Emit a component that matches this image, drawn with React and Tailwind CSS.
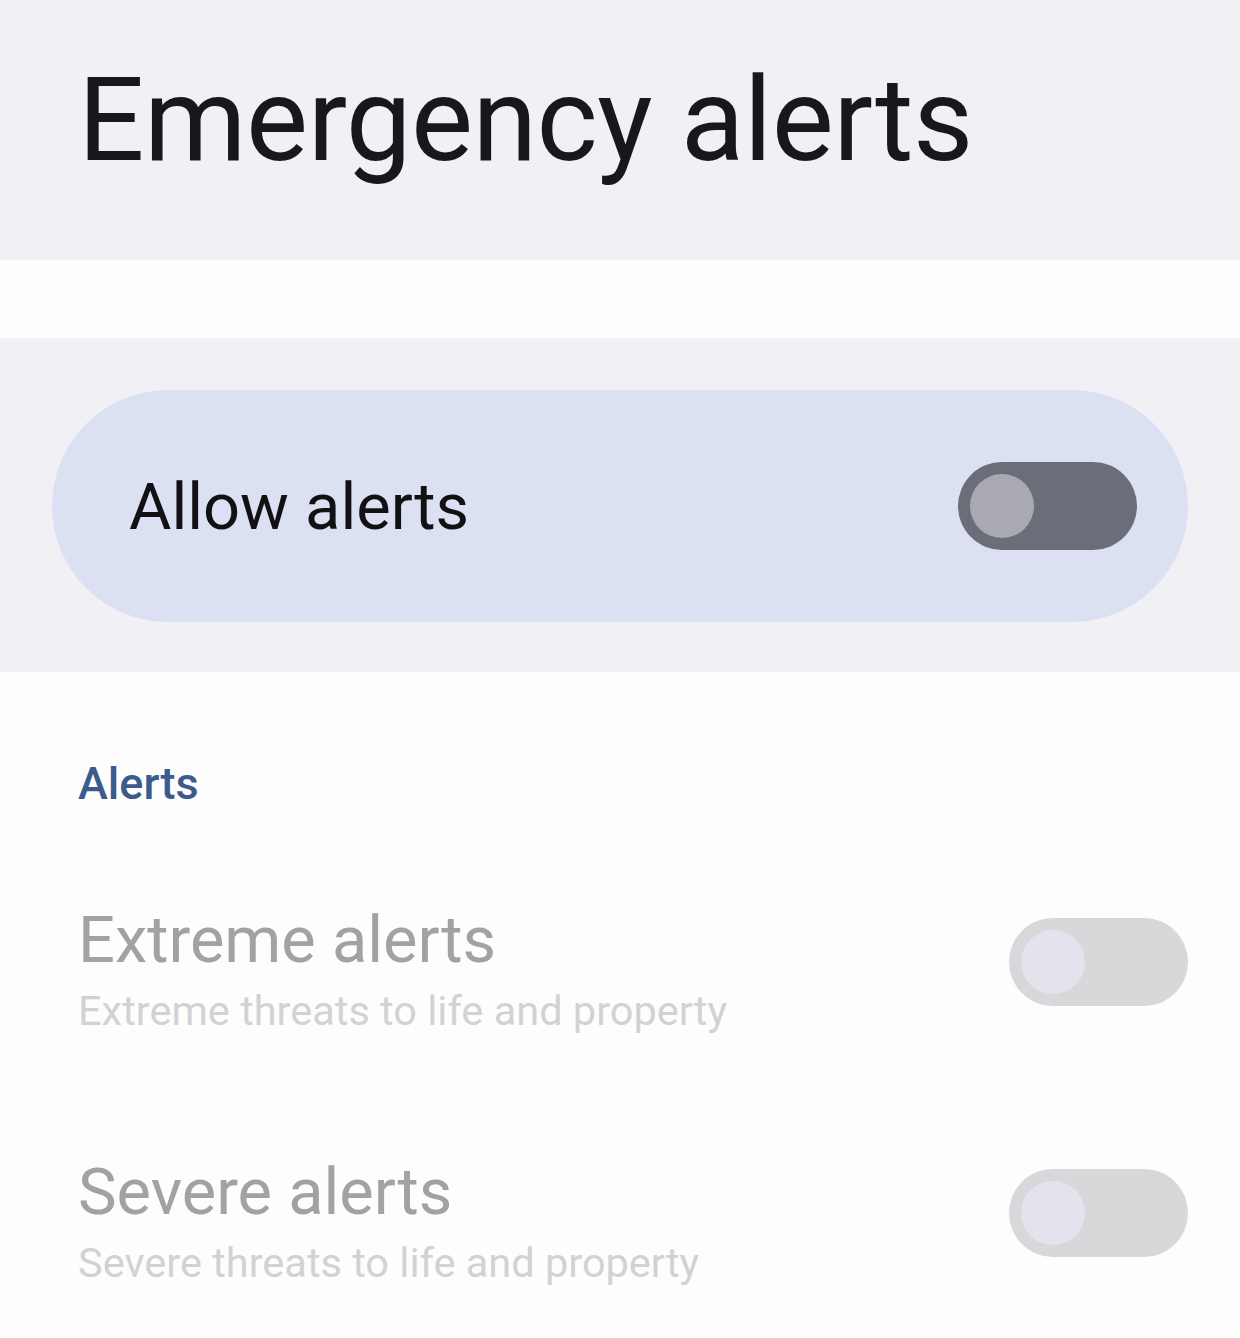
import { useState } from 'react';

const font = { fontFamily: 'Roboto, "Noto Sans", sans-serif' };

// Android-style switch; `muted` is the disabled look used under the section
const Switch = ({ on = false, muted = false }) => (
  <div
    className={`flex items-center w-[179px] h-[88px] rounded-full px-[12px] shrink-0 ${
      muted ? 'bg-[#d8d8da]' : 'bg-[#6b6e78]'
    } ${on ? 'justify-end' : 'justify-start'}`}
  >
    <div className={`w-[64px] h-[64px] rounded-full ${muted ? 'bg-[#e3e3ee]' : 'bg-[#a9aab1]'}`} />
  </div>
);

const AlertRow = ({ title, summary }) => (
  <div className="flex items-center justify-between pl-[78px] pr-[52px]">
    <div className="flex flex-col pt-[16px]">
      <span className="text-[65px] leading-none text-[#a2a2a4]">{title}</span>
      <span className="text-[41.5px] leading-none text-[#d2d2d4] mt-[17px]">{summary}</span>
    </div>
    <Switch muted />
  </div>
);

export default function App() {
  const [allowed] = useState(false);

  return (
    <div className="w-[1240px] h-[1338px] bg-[#fdfdfd] overflow-hidden" style={font}>
      <header className="h-[260px] bg-[#f0f0f5] pl-[78px] pt-[62px]">
        <h1 className="text-[117px] leading-none text-[#18181a] tracking-[-0.5px]">Emergency alerts</h1>
      </header>

      <div className="h-[78px]" />

      <section className="h-[334px] bg-[#f0f0f5] px-[52px] pt-[52px]">
        <div className="h-[232px] rounded-full bg-[#dce0f3] flex items-center justify-between pl-[77px] pr-[51px]">
          <span className="text-[65px] leading-none text-[#111113] pt-[3px]">Allow alerts</span>
          <Switch on={allowed} />
        </div>
      </section>

      <div className="pt-[89px]">
        <h2 className="pl-[78px] text-[45px] leading-none font-medium text-[#3d5a8c]">Alerts</h2>
        <div className="mt-[86px] flex flex-col gap-[112px]">
          <AlertRow title="Extreme alerts" summary="Extreme threats to life and property" />
          <AlertRow title="Severe alerts" summary="Severe threats to life and property" />
        </div>
      </div>
    </div>
  );
}
